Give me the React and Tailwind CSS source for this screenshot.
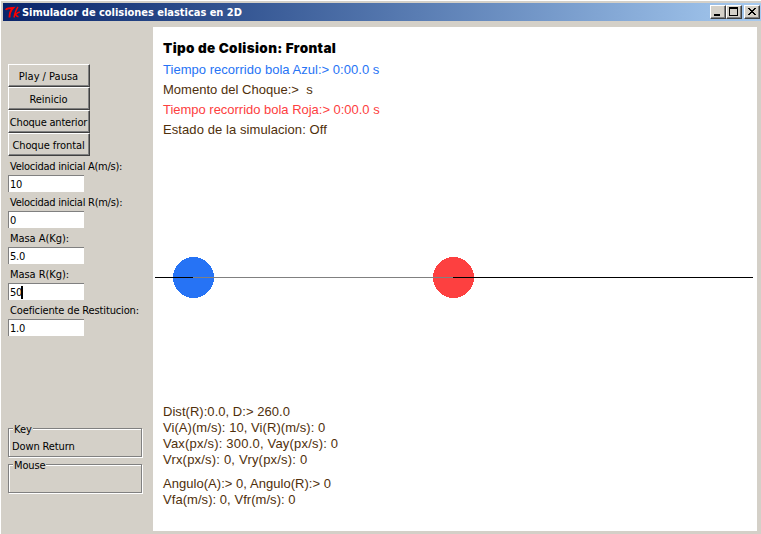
import React from 'react';

function WinButton({ children, className = '' }) {
  return (
    <div className={`flex h-[14px] w-4 border-t border-l border-r border-b border-t-white border-l-white border-r-[#404040] border-b-[#404040] bg-[#d4d0c8] shadow-[inset_-1px_-1px_0_#808080] ${className}`}>
      <svg className="h-3 w-[14px]" viewBox="0 0 14 12" shapeRendering="crispEdges">{children}</svg>
    </div>
  );
}

function ToolButton({ children, spacing }) {
  return (
    <button className="flex h-[23px] w-[82px] items-center justify-center border border-t-white border-l-white border-r-[#404040] border-b-[#404040] bg-[#d4d0c8] pt-[2px] pr-px shadow-[inset_-1px_-1px_0_#808080]">
      <span className={`whitespace-nowrap ${spacing}`}>{children}</span>
    </button>
  );
}

function Field({ label, value, spacing, caret }) {
  return (
    <div className="h-9">
      <div className="flex h-[19px] items-center pt-[2px] pl-[2px]">
        <span className={`whitespace-pre ${spacing}`}>{label}</span>
      </div>
      <div className="flex h-[17px] w-[76px] items-center border-t border-l border-[#808080] bg-white pt-px pl-px">
        <span className="tracking-[-0.2px]">{value}</span>
        {caret && <span className="-ml-px h-[13px] w-[2px] bg-black" />}
      </div>
    </div>
  );
}

function Group({ title, titleSpacing, children }) {
  return (
    <fieldset className="relative h-[30px] w-[135px]">
      <div className="h-[29px] w-[134px] border border-[#808080] shadow-[1px_1px_0_#fff,inset_1px_1px_0_#fff]" />
      <span className={`absolute top-[-5px] left-[5px] bg-[#d4d0c8] px-px leading-[14px] ${titleSpacing}`}>{title}</span>
      <span className="absolute top-3 left-1 leading-[14px] tracking-[-0.12px] whitespace-nowrap">{children}</span>
    </fieldset>
  );
}

function Line({ children, className }) {
  return (
    <div className="flex">
      <span className={`whitespace-pre ${className}`}>{children}</span>
    </div>
  );
}

export default function App() {
  return (
    <div className="flex h-[534px] w-[761px] flex-col overflow-hidden border-t border-l border-white bg-[#d4d0c8] pt-[2px] pl-[2px] font-['DejaVu_Sans_Condensed','DejaVu_Sans',sans-serif] text-[11px] leading-[14px] text-black">
      <header className="flex h-[18px] shrink-0 items-center bg-linear-to-r from-[#0a246a] to-[#a6caf0]">
        <svg className="ml-[2px] h-4 w-4" viewBox="0 0 16 16" fill="none" stroke="#ff0000">
          <path d="M1 6 C1.500 3.500 4 4.500 8 4 C6 6 4.500 9.500 4.500 13.500" strokeWidth="1.900" />
          <path d="M13 3 C11.500 5 10 9 9 13.500 M15 8 C13.500 8 11.500 9.500 10.500 10.500 C11.500 11 11.500 13 13.500 12.500" strokeWidth="1.500" />
        </svg>
        <span className="ml-px pt-px text-[11px] font-bold tracking-[-0.03px] whitespace-nowrap text-white">Simulador de colisiones elasticas en 2D</span>
        <div className="ml-auto flex pr-px">
          <WinButton><path fill="#000" d="M3 8h6v2H3z" /></WinButton>
          <WinButton><path fill="#000" fillRule="evenodd" d="M2 1h9v9H2zM3 3h7v6H3z" /></WinButton>
          <WinButton className="ml-[2px]"><path fill="#000" d="M3 2h2v1h1v1h2v-1h1v-1h2v1h-1v1h-1v1h-1v1h1v1h1v1h1v1h-2v-1h-1v-1h-2v1h-1v1h-2v-1h1v-1h1v-1h1v-1h-1v-1h-1v-1h-1z" /></WinButton>
        </div>
      </header>
      <main className="flex grow pt-[6px]">
        <aside className="w-[150px] pt-[37px] pl-[5px]">
          <div className="flex flex-col">
            <ToolButton spacing="">Play / Pausa</ToolButton>
            <ToolButton spacing="tracking-[-0.05px]">Reinicio</ToolButton>
            <ToolButton spacing="tracking-[-0.2px]">Choque anterior</ToolButton>
            <ToolButton spacing="tracking-[-0.08px]">Choque frontal</ToolButton>
          </div>
          <Field label="Velocidad inicial A(m/s):" value="10" spacing="tracking-[-0.26px]" />
          <Field label="Velocidad inicial R(m/s):" value="0" spacing="tracking-[-0.26px]" />
          <Field label="Masa A(Kg):" value="5.0" spacing="tracking-[-0.05px]" />
          <Field label="Masa R(Kg):" value="50" spacing="tracking-[-0.05px]" caret />
          <Field label="Coeficiente de Restitucion:" value="1.0" spacing="tracking-[-0.14px]" />
          <div className="mt-[92px] flex flex-col gap-[6px]">
            <Group title="Key" titleSpacing="">Down Return</Group>
            <Group title="Mouse" titleSpacing="tracking-[-0.15px]" />
          </div>
        </aside>
        <section className="flex h-[504px] w-[604px] flex-col bg-white font-['Liberation_Sans',Arial,sans-serif] text-[13px] text-[#4f2f0b]">
          <div className="h-[230px] shrink-0 pt-[11px] pl-[10px] leading-5">
            <Line className="mb-[2px] h-5 font-['Inter',sans-serif] text-[13.5px] leading-5 font-black tracking-[0.37px] text-black">Tipo de Colision: Frontal</Line>
            <Line className="tracking-[0.03px] text-[#2673f5]">{'Tiempo recorrido bola Azul:> 0:00.0 s'}</Line>
            <Line className="tracking-[0.02px]">{'Momento del Choque:>  s'}</Line>
            <Line className="tracking-[-0.02px] text-[#fd4040]">{'Tiempo recorrido bola Roja:> 0:00.0 s'}</Line>
            <Line className="tracking-[0.08px]">Estado de la simulacion: Off</Line>
          </div>
          <svg className="h-[42px] w-[604px] shrink-0" viewBox="0 0 604 42" shapeRendering="crispEdges">
            <circle cx="40.500" cy="20.500" r="20.500" fill="#2673f5" />
            <circle cx="300.500" cy="20.500" r="20.500" fill="#fd4040" />
            <path d="M2 20.500H40M300 20.500H600" stroke="#000" />
            <path d="M40 20.500H300" stroke="#808080" />
          </svg>
          <div className="pt-[105px] pl-[10px] leading-4">
            <Line className="tracking-[0.04px]">{'Dist(R):0.0, D:> 260.0'}</Line>
            <Line className="tracking-[0.06px]">Vi(A)(m/s): 10, Vi(R)(m/s): 0</Line>
            <Line className="tracking-[0.2px]">Vax(px/s): 300.0, Vay(px/s): 0</Line>
            <Line className="tracking-[0.2px]">Vrx(px/s): 0, Vry(px/s): 0</Line>
          </div>
          <div className="pt-2 pl-[10px] leading-4">
            <Line className="tracking-[0.04px]">{'Angulo(A):> 0, Angulo(R):> 0'}</Line>
            <Line className="tracking-[0.05px]">Vfa(m/s): 0, Vfr(m/s): 0</Line>
          </div>
        </section>
      </main>
    </div>
  );
}
